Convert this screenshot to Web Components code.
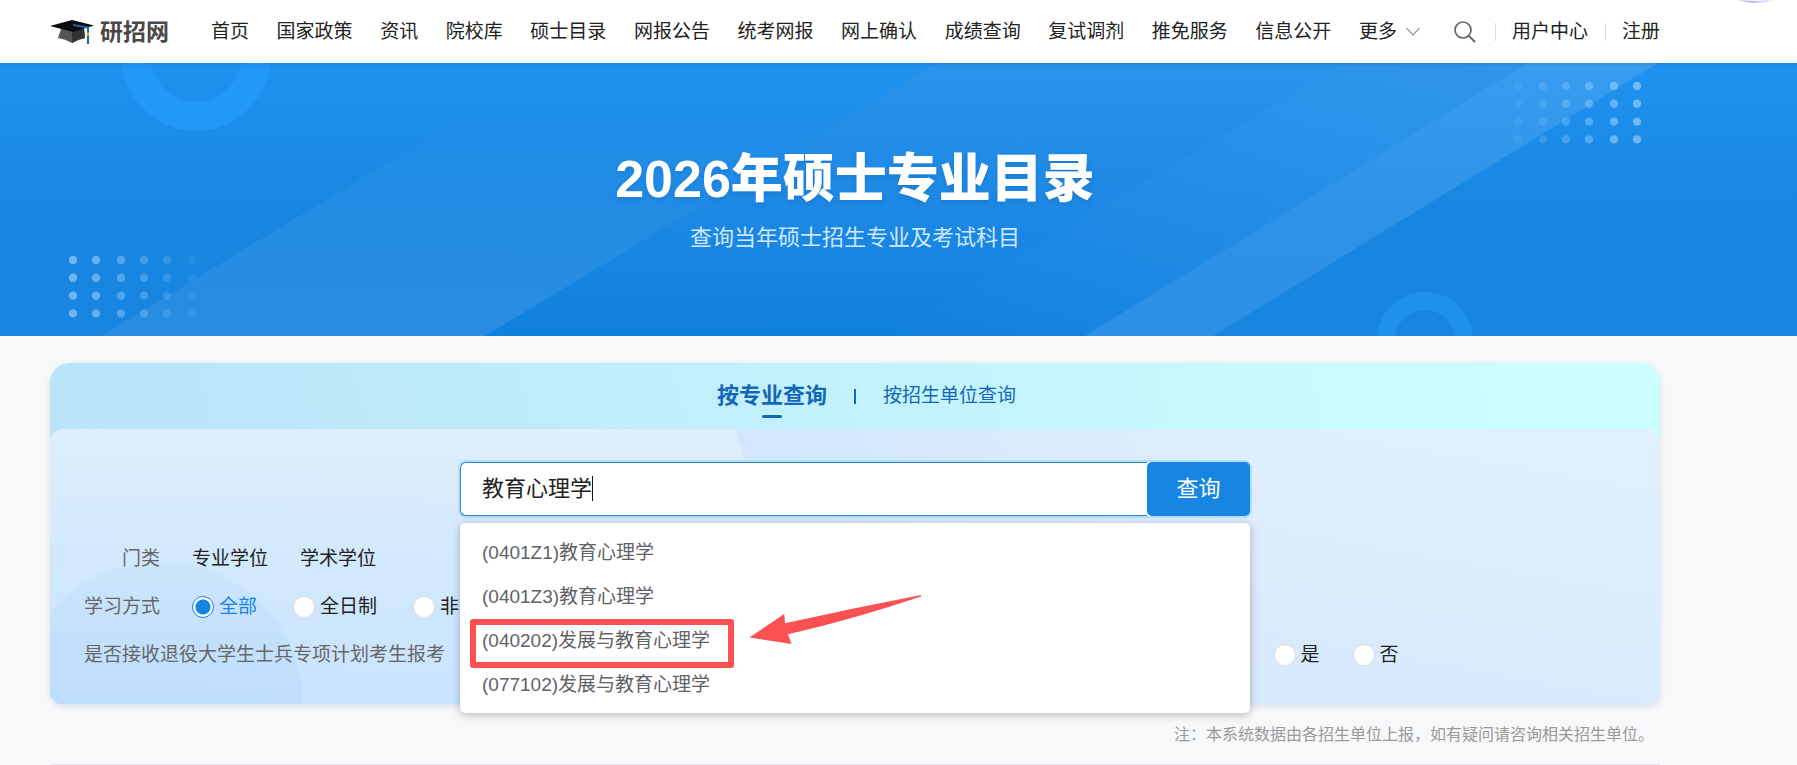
<!DOCTYPE html>
<html lang="zh-CN">
<head>
<meta charset="utf-8">
<meta name="viewport" content="width=device-width, initial-scale=1">
<title>2026年硕士专业目录</title>
<style>
    body {
        margin: 0;
        min-height: 100vh;
        display: flex;
        flex-direction: column;
        background: #f7f8fa;
        color: #222;
        font: 19px/28px "Liberation Sans", "Noto Sans CJK SC", sans-serif;
        --side-left: 50px;
        --side-right: 137px;
        --blue: #1786e2;
    }

    main {
        flex: 1;
        display: flex;
        flex-direction: column;
        padding: 27px var(--side-right) 0 var(--side-left);
    }
</style>
</head>
<body>
<site-header>
    <a href="#">首页</a>
    <a href="#">国家政策</a>
    <a href="#">资讯</a>
    <a href="#">院校库</a>
    <a href="#">硕士目录</a>
    <a href="#">网报公告</a>
    <a href="#">统考网报</a>
    <a href="#">网上确认</a>
    <a href="#">成绩查询</a>
    <a href="#">复试调剂</a>
    <a href="#">推免服务</a>
    <a href="#">信息公开</a>
    <a href="#" slot="user">用户中心</a>
    <a href="#" slot="user">注册</a>
</site-header>
<hero-banner>
    <span slot="title">2026年硕士专业目录</span>
    <span slot="subtitle">查询当年硕士招生专业及考试科目</span>
</hero-banner>
<main>
    <query-panel>
        <search-box slot="search" value="教育心理学">
            <suggest-list>
                <suggest-item>(0401Z1)教育心理学</suggest-item>
                <suggest-item>(0401Z3)教育心理学</suggest-item>
                <suggest-item marked>(040202)发展与教育心理学</suggest-item>
                <suggest-item>(077102)发展与教育心理学</suggest-item>
            </suggest-list>
        </search-box>
    </query-panel>
    <result-area>注：本系统数据由各招生单位上报，如有疑问请咨询相关招生单位。</result-area>
</main>
<float-tools></float-tools>

<script>
function define(name, html, setup) {
    const template = document.createElement('template');
    template.innerHTML = html;
    customElements.define(name, class extends HTMLElement {
        constructor() {
            super();
            this.attachShadow({ mode: 'open' });
            this.shadowRoot.appendChild(template.content.cloneNode(true));
        }
        connectedCallback() {
            if (setup) setup(this, this.shadowRoot);
        }
    });
}

define('site-logo', `
<style>
    :host { display: block; }
    a {
        display: flex;
        align-items: center;
        gap: 5px;
        color: #484848;
        font-size: 23px;
        font-weight: 700;
        text-decoration: none;
    }
    svg { display: block; }
</style>
<a href="#">
    <svg width="45" height="26" viewBox="0 0 45 26" aria-hidden="true">
        <path d="M11 10 L8 19 Q15 20 22 24 Q29 20 35 19 L34 10 Z" fill="#555"/>
        <path d="M22 12 L22 24 Q29 20 35 19 L34 9 Z" fill="#333"/>
        <path d="M0 7 L22 1 L44 6.5 L23 13 Z" fill="#0b0b0b"/>
        <path d="M23 6 L38 8.5 L38 25" fill="none" stroke="#1767b5" stroke-width="2"/>
        <circle cx="38" cy="15" r="1.6" fill="#e8c33c"/>
    </svg>
    研招网
</a>`);

define('site-header', `
<style>
    :host {
        display: block;
        position: relative;
        z-index: 2;
        background: #fff;
        box-shadow: 0 1px 4px rgba(0, 0, 0, .12);
    }
    header {
        display: flex;
        align-items: center;
        height: 63px;
        padding: 0 var(--side-right) 0 var(--side-left);
        white-space: nowrap;
    }
    nav {
        flex: 1;
        display: flex;
        justify-content: space-between;
        margin: 0 34px 0 42px;
    }
    ::slotted(a), nav a { color: #222; text-decoration: none; }
    nav a { display: flex; align-items: center; gap: 9px; }
    .search { border: 0; padding: 0; background: none; margin-right: 19px; }
    svg { display: block; }
    .user { display: flex; }
    ::slotted([slot=user]) {
        padding-left: 17px;
        margin-right: 17px;
        background: linear-gradient(#ddd, #ddd) 0 50% / 1px 18px no-repeat;
    }
    ::slotted([slot=user]:last-child) { margin-right: 0; }
</style>
<header>
    <site-logo></site-logo>
    <nav>
        <slot></slot>
        <a href="#">更多
            <svg width="14" height="10" viewBox="0 0 14 10" aria-hidden="true">
                <path d="M0.5 1 L7 8 L13.500 1" fill="none" stroke="#999" stroke-width="1.2"/>
            </svg>
        </a>
    </nav>
    <button class="search" aria-label="搜索">
        <svg width="22" height="22" viewBox="0 0 22 22">
            <circle cx="9" cy="9" r="8" fill="none" stroke="#666" stroke-width="1.7"/>
            <path d="M14.500 14.500 L21 21" stroke="#666" stroke-width="1.9"/>
        </svg>
    </button>
    <div class="user"><slot name="user"></slot></div>
</header>`);

define('hero-banner', `
<style>
    :host {
        display: block;
        position: relative;
        overflow: hidden;
        background: #1885e0;
        color: #fff;
    }
    svg { position: absolute; inset: 0; width: 100%; height: 100%; }
    .text {
        position: relative;
        box-sizing: border-box;
        min-height: 273px;
        padding: 82px var(--side-right) 0 var(--side-left);
        text-align: center;
    }
    h1 {
        margin: 0 0 10px;
        font-size: 52px;
        font-weight: 900;
        line-height: 68px;
        text-shadow: 0 2px 4px rgba(0, 60, 130, .2);
    }
    p { margin: 0; font-size: 22px; line-height: 30px; color: #cfe8ff; }
</style>
<svg viewBox="0 0 1797 273" preserveAspectRatio="xMidYMid slice" aria-hidden="true">
    <defs>
        <linearGradient id="base" x1="0" y1="0" x2="0" y2="1">
            <stop offset="0" stop-color="#1f92f0"/>
            <stop offset=".55" stop-color="#1886e1"/>
            <stop offset="1" stop-color="#1885e0"/>
        </linearGradient>
        <linearGradient id="bandLeft" x1="0" y1="0" x2="0" y2="1">
            <stop offset=".15" stop-color="#fff" stop-opacity="0"/>
            <stop offset=".6" stop-color="#fff" stop-opacity=".05"/>
            <stop offset="1" stop-color="#fff" stop-opacity=".07"/>
        </linearGradient>
        <linearGradient id="bandMid" x1="0" y1="0" x2="0" y2="1">
            <stop offset="0" stop-color="#2a93ea"/>
            <stop offset=".35" stop-color="#218ce6"/>
            <stop offset="1" stop-color="#1080de"/>
        </linearGradient>
        <linearGradient id="bandRight" x1="0" y1="0" x2="0" y2="1">
            <stop offset="0" stop-color="#379df0"/>
            <stop offset=".6" stop-color="#2d92e6"/>
            <stop offset="1" stop-color="#2b90e6"/>
        </linearGradient>
        <linearGradient id="sheen" x1="0" y1="0" x2="1" y2="0">
            <stop offset="0" stop-color="#2a92ea" stop-opacity="0"/>
            <stop offset="1" stop-color="#3398ec"/>
        </linearGradient>
    </defs>
    <rect width="1797" height="273" fill="url(#base)"/>
    <path d="M101 273 L553 0 H937 L485 273 Z" fill="url(#bandLeft)"/>
    <path d="M485 273 L937 0 H1528 L1085 273 Z" fill="url(#bandMid)"/>
    <path d="M885 273 L1345 0 H1528 L1085 273 Z" fill="url(#sheen)" opacity=".6"/>
    <path d="M1085 273 L1528 0 H1658 L1213 273 Z" fill="url(#bandRight)"/>
    <circle cx="196" cy="-7" r="60" fill="none" stroke="#2299f8" stroke-width="29"/>
    <circle cx="1425" cy="277" r="39" fill="none" stroke="#1e90ee" stroke-width="18"/>
    <g id="dots" fill="#a5d4fb"></g>
</svg>
<div class="text">
    <h1><slot name="title"></slot></h1>
    <p><slot name="subtitle"></slot></p>
</div>`, (host, root) => {
    // two 6x4 dot grids, each fading out towards the middle of the banner
    const columns = [0, 23, 48, 71, 94, 119];
    const fade = [.62, .55, .42, .3, .2, .1];
    let dots = '';
    for (let row = 0; row < 4; row++) {
        columns.forEach((x, i) => {
            dots += `<circle cx="${73 + x}" cy="${197 + row * 17.8}" r="4.2" opacity="${fade[i]}"/>`;
            dots += `<circle cx="${1637 - x}" cy="${23 + row * 17.8}" r="4.2" opacity="${fade[i]}"/>`;
        });
    }
    root.getElementById('dots').innerHTML = dots;
});

define('query-panel', `
<style>
    :host {
        display: block;
        border-radius: 20px 20px 12px 12px;
        background: linear-gradient(75deg, #b8e2f9, #cbffff 95%);
        box-shadow: 0 2px 6px rgba(0, 40, 90, .12);
    }
    .tabs {
        display: grid;
        grid-template-columns: 1fr 2px 1fr;
        align-items: center;
        column-gap: 27px;
        height: 66px;
    }
    .tabs a { color: #1467b8; text-decoration: none; justify-self: start; }
    .tabs a.active {
        justify-self: end;
        position: relative;
        font-size: 22px;
        font-weight: 700;
    }
    .tabs a.active::after {
        content: "";
        position: absolute;
        left: 50%;
        bottom: -8px;
        width: 20px;
        height: 3px;
        margin-left: -10px;
        border-radius: 2px;
        background: #1467b8;
    }
    .tabs i { height: 15px; background: #1467b8; }
    .body {
        position: relative;
        box-sizing: border-box;
        min-height: 273px;
        padding: 33px 34px 35px;
        border-radius: 14px 14px 12px 12px;
        background: linear-gradient(190deg, #e0effe 10%, #d9eafc 50%, #d2e7fe 85%, #c8e5fe);
    }
    .art {
        position: absolute;
        inset: 0;
        width: 100%;
        height: 100%;
        border-radius: inherit;
    }
    .rows {
        position: relative;
        display: grid;
        gap: 20px;
        margin-top: 29px;
    }
    .row { display: flex; align-items: center; gap: 32px; }
    .row.wide { display: grid; grid-template-columns: 27fr 8fr; gap: 0; }
    .name { min-width: 76px; text-align: right; color: #666; }
    .wide .name { text-align: left; }
    .row a { color: #222; text-decoration: none; }
    .group { gap: 33px; }
    .methods { gap: 36px; }
    ::slotted(search-box) { position: relative; z-index: 1; }
</style>
<div class="tabs">
    <a class="active" href="#">按专业查询</a>
    <i></i>
    <a href="#">按招生单位查询</a>
</div>
<div class="body">
    <svg class="art" viewBox="0 0 1610 273" preserveAspectRatio="none" aria-hidden="true">
        <defs>
            <linearGradient id="glow" x1="0" y1="0" x2="0" y2="1">
                <stop offset="0" stop-color="#e0f0fc" stop-opacity=".7"/>
                <stop offset=".5" stop-color="#cfe8fe" stop-opacity=".6"/>
                <stop offset="1" stop-color="#c4e2fd" stop-opacity=".6"/>
            </linearGradient>
            <linearGradient id="shade" x1="0" y1="0" x2="1" y2="0">
                <stop offset="0" stop-color="#cfe5fe" stop-opacity=".8"/>
                <stop offset="1" stop-color="#cfe5fe" stop-opacity="0"/>
            </linearGradient>
            <linearGradient id="disc" x1="0" y1="0" x2="0" y2="1">
                <stop offset="0" stop-color="#bcdcf8" stop-opacity=".25"/>
                <stop offset=".5" stop-color="#b9dcfb" stop-opacity=".7"/>
            </linearGradient>
        </defs>
        <path d="M0 0 H684 Q700 40 712 100 V273 H0 Z" fill="url(#glow)"/>
        <path d="M684 0 H1180 V273 H712 V100 Q700 40 684 0 Z" fill="url(#shade)"/>
        <circle cx="110" cy="274" r="143" fill="url(#disc)"/>
    </svg>
    <slot name="search"></slot>
    <div class="rows">
        <div class="row">
            <span class="name">门类</span>
            <a href="#">专业学位</a>
            <a href="#">学术学位</a>
        </div>
        <div class="row">
            <span class="name">学习方式</span>
            <radio-group class="methods" options="全部,全日制,非" checked="全部"></radio-group>
        </div>
        <div class="row wide">
            <span class="name">是否接收退役大学生士兵专项计划考生报考</span>
            <radio-group class="group" options="是,否"></radio-group>
        </div>
    </div>
</div>`);

define('radio-group', `
<style>
    :host { display: flex; }
    label { display: flex; align-items: center; gap: 5px; white-space: nowrap; }
    input {
        appearance: none;
        box-sizing: border-box;
        width: 22px;
        height: 22px;
        margin: 0;
        border: 1px solid #dadfe5;
        border-radius: 50%;
        background: #fff;
    }
    input:checked {
        border-color: var(--blue);
        background: radial-gradient(circle, var(--blue) 7px, #fff 8px);
    }
    input:checked + span { color: var(--blue); }
</style>`, (host, root) => {
    host.getAttribute('options').split(',').forEach(text => {
        const label = document.createElement('label');
        label.innerHTML = `<input type="radio" name="option"><span>${text}</span>`;
        label.firstChild.checked = text === host.getAttribute('checked');
        root.appendChild(label);
    });
});

define('search-box', `
<style>
    :host {
        display: block;
        width: 790px;
        max-width: 100%;
        margin: 0 auto;
    }
    form {
        position: relative;
        display: flex;
        height: 54px;
        border-radius: 6px;
        background: #fff;
        box-shadow: 0 0 0 2px #b0dffb;
        font-size: 22px;
    }
    input {
        flex: 1;
        min-width: 0;
        padding: 0 21px;
        border: 1px solid #2a86cf;
        border-right: 0;
        border-radius: 6px 0 0 6px;
        outline: 0;
        background: none;
        color: #222;
        font: inherit;
        caret-color: transparent;
    }
    .caret {
        position: absolute;
        left: calc(22px + 5em);
        top: 14px;
        width: 1px;
        height: 25px;
        background: #111;
    }
    button {
        width: 103px;
        border: 0;
        border-radius: 5px;
        background: var(--blue);
        color: #fff;
        font: inherit;
    }
    .menu { position: absolute; top: 61px; left: 0; right: 0; }
</style>
<form onsubmit="return false">
    <input type="text" aria-label="专业名称">
    <i class="caret"></i>
    <button>查询</button>
</form>
<div class="menu"><slot></slot></div>`, (host, root) => {
    root.querySelector('input').value = host.getAttribute('value');
});

define('suggest-list', `
<style>
    :host {
        display: block;
        padding: 8px 0 6px;
        border-radius: 5px;
        background: #fff;
        box-shadow: 0 2px 8px rgba(0, 0, 0, .25);
    }
</style>
<slot></slot>`);

define('suggest-item', `
<style>
    :host {
        display: block;
        position: relative;
        padding: 8px 22px;
        color: #606266;
    }
    .mark { display: none; }
    :host([marked]) .mark { display: block; }
    .frame {
        position: absolute;
        box-sizing: border-box;
        left: 10px;
        top: 0;
        width: 264px;
        height: 49px;
        border: 6px solid #fb5152;
        border-radius: 3px;
    }
    .arrow { position: absolute; left: 289px; top: -25px; }
</style>
<slot></slot>
<div class="mark">
    <div class="frame"></div>
    <svg class="arrow" width="174" height="51" viewBox="0 0 174 51" aria-hidden="true">
        <path d="M0.500 43.500 L35.300 20 L36 29.300 Q105 14 172 1 L172 2.400 Q105 25 39 40.300 L42.500 50 Z" fill="#fb5152"/>
    </svg>
</div>`);

define('result-area', `
<style>
    :host { flex: 1; display: flex; flex-direction: column; }
    p {
        margin: 19px 6px 17px;
        color: #999;
        font-size: 16px;
        line-height: 24px;
        text-align: right;
    }
    section { flex: 1; border: 1px solid #e4e6e9; border-bottom: 0; }
</style>
<p><slot></slot></p>
<section></section>`);

define('float-tools', `
<style>
    svg { position: absolute; top: 0; right: 20px; z-index: 3; }
    i {
        position: fixed;
        right: 20px;
        bottom: 13px;
        width: 49px;
        height: 32px;
        background: #f9fafb;
    }
</style>
<svg width="44" height="5" viewBox="0 0 44 5" aria-hidden="true">
    <defs>
        <linearGradient id="ring">
            <stop offset="0" stop-color="#b9aef5" stop-opacity="0"/>
            <stop offset=".4" stop-color="#b7acf3"/>
            <stop offset="1" stop-color="#d8cdf2" stop-opacity=".3"/>
        </linearGradient>
    </defs>
    <path d="M2 -1 Q22 5 42 -1" fill="none" stroke="url(#ring)" stroke-width="2"/>
</svg>
<i></i>`);
</script>
</body>
</html>
